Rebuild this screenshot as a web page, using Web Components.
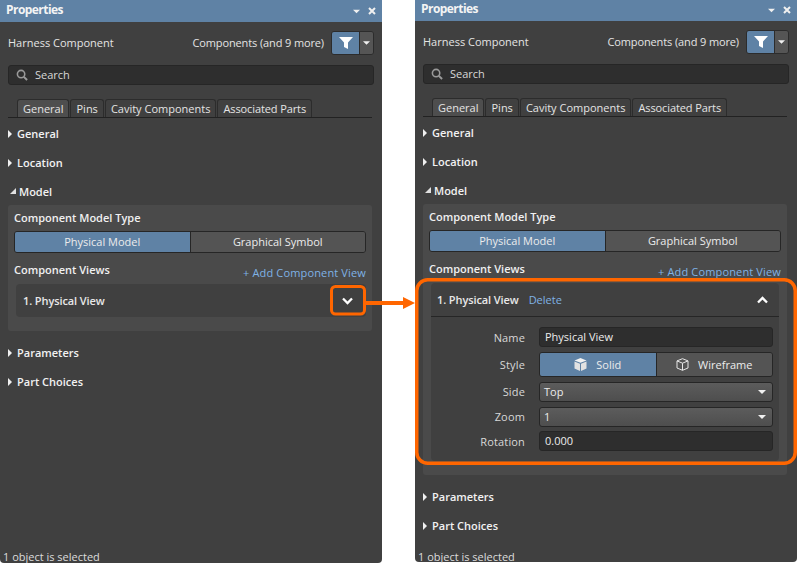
<!DOCTYPE html>
<html>
<head>
<meta charset="utf-8">
<title>Properties</title>
<style>
  html, body { margin: 0; padding: 0; background: #fff; }
  body { width: 797px; height: 563px; overflow: hidden; position: relative; font: 11px "Open Sans", sans-serif; }
  .stage { display: flex; justify-content: space-between; align-items: flex-start; }
  .second { margin-top: -1px; }
</style>
</head>
<body>
<div class="stage">
  <prop-panel>
    <prop-section label="Model" open>
      <model-box>
        <view-card title="1. Physical View"></view-card>
      </model-box>
    </prop-section>
  </prop-panel>
  <prop-panel class="second">
    <prop-section label="Model" open>
      <model-box>
        <view-card title="1. Physical View" expanded></view-card>
      </model-box>
    </prop-section>
  </prop-panel>
</div>
<call-out></call-out>

<script>
"use strict";

(function () {
  var ICON = {
    right: '<svg width="4" height="8" viewBox="0 0 4 8"><path d="M0 0L4 4L0 8Z" fill="#f0f0f0"/></svg>',
    corner: '<svg width="6" height="6" viewBox="0 0 6 6"><path d="M6 0V6H0Z" fill="#e0e0e0"/></svg>',
    down: '<svg width="10" height="5" viewBox="0 0 10 5"><path d="M0 0H10L5 5Z" fill="#f0f0f0"/></svg>',
    funnel: '<svg width="14" height="12" viewBox="0 0 14 12"><path d="M0 0H14L9 5.5V12L5 10V5.5Z" fill="#fff"/></svg>',
    search: '<svg width="12" height="12" viewBox="0 0 13 13" fill="none" stroke="#9a9a9a"><circle cx="5.5" cy="5.5" r="4" stroke-width="1.7"/><path d="M8.5 8.5L12 12" stroke-width="2.2"/></svg>',
    chevDown: '<svg width="11" height="8" viewBox="0 0 11 8" fill="none" stroke="#fff" stroke-width="2.3"><path d="M1 1.5L5.5 6L10 1.5"/></svg>',
    chevUp: '<svg width="11" height="8" viewBox="0 0 11 8" fill="none" stroke="#fff" stroke-width="2.3"><path d="M1 6.5L5.5 2L10 6.5"/></svg>',
    close: '<svg width="8" height="8" viewBox="0 0 8 8" stroke="#f0f0f0" stroke-width="2"><path d="M1 1L7 7M7 1L1 7"/></svg>',
    solid: '<svg width="13" height="13" viewBox="0 0 13 13"><path d="M6.5 0L12.5 2.4L6.5 4.8L.5 2.4Z" fill="#f2f2f2"/><path d="M.5 3.6L6 5.8V13L.5 10.6ZM12.5 3.6L7 5.8V13L12.5 10.6Z" fill="#e2e2e2"/></svg>',
    wire: '<svg width="13" height="13" viewBox="0 0 13 13" fill="none" stroke="#e6e6e6"><path d="M6.5 .7L12 2.9V10L6.5 12.3L1 10V2.9ZM1 2.9L6.5 5.2L12 2.9M6.5 5.2V12.3"/></svg>'
  };

  /* ── panel shell: title bar, filter row, search, tabs, sections ── */
  class PropPanel extends HTMLElement {
    connectedCallback() {
      var root = this.attachShadow({ mode: "open" });
      root.innerHTML = `
        <style>
          :host { display: flex; flex-direction: column; width: 382px; height: 563px; background: #404040; border-radius: 0 0 4px 4px;
                  color: #e4e4e4; font: 11px "Open Sans", sans-serif; }
          .title { height: 22px; background: #5f82a5; display: flex; align-items: center; padding: 0 6px; flex: none; }
          .title b { flex: 1; font-size: 12px; font-weight: 700; color: #f4f4f4; margin-top: -3px; letter-spacing: -.55px; }
          .title span { display: flex; margin-left: 8px; }
          .head { height: 24px; margin: 9px 8px 0; display: flex; align-items: center; flex: none; }
          .head .kind { flex: 1; padding-bottom: 2px; }
          .head .filter { margin-right: 7px; padding-bottom: 2px; letter-spacing: -.12px; }
          .funnel { display: flex; width: 43px; height: 24px; border-radius: 3px; overflow: hidden; box-sizing: border-box; border: 1px solid #2c2c2c; }
          .funnel i { flex: none; width: 28px; background: #5f82a5; display: flex; align-items: center; justify-content: center; border-right: 1px solid #2c2c2c; box-sizing: border-box; }
          .funnel u { flex: 1; background: #555; display: flex; align-items: center; justify-content: center; }
          .funnel u svg { width: 7px; height: 4px; }
          .search { height: 20px; margin: 10px 8px 0; box-sizing: border-box; border: 1px solid #262626; border-radius: 3px;
                    background: #2e2e2e; display: flex; align-items: center; gap: 7px; padding-left: 7px; flex: none; color: #d8d8d8; }
          .search span { padding-bottom: 2px; }
          .tabs { height: 18px; margin: 14px 10px 1px 8px; padding-left: 9px; display: flex; align-items: flex-end; border-bottom: 1px solid #222; flex: none; }
          .tab { height: 18px; box-sizing: border-box; border: 1px solid #2c2c2c; border-bottom: 0; border-radius: 3px 3px 0 0; padding: 0 5px 1px;
                 display: flex; align-items: center; background: #404040; margin-right: 1px; }
          .tab:last-child { letter-spacing: -.1px; }
          .tab.on { background: #4e4e4e; }
          .status { margin-top: auto; margin-bottom: 1px; height: 11px; line-height: 11px; padding-left: 3px; color: #dcdcdc; white-space: nowrap; }
          :host(.second) .status { margin-bottom: 0; }
          .body { display: flex; flex-direction: column; flex: none; }
        </style>
        <div class="title"><b>Properties</b><span>${ICON.down.replace('width="10"', 'width="7"')}</span><span>${ICON.close}</span></div>
        <div class="head">
          <span class="kind">Harness Component</span>
          <span class="filter">Components (and 9 more)</span>
          <span class="funnel"><i>${ICON.funnel}</i><u>${ICON.down}</u></span>
        </div>
        <div class="search">${ICON.search}<span>Search</span></div>
        <div class="tabs">
          <span class="tab on">General</span><span class="tab">Pins</span><span class="tab">Cavity Components</span><span class="tab">Associated Parts</span>
        </div>
        <div class="body">
          <prop-section label="General"></prop-section>
          <prop-section label="Location"></prop-section>
          <slot></slot>
          <prop-section label="Parameters"></prop-section>
          <prop-section label="Part Choices"></prop-section>
        </div>
        <div class="status">1 object is selected</div>`;
    }
  }

  /* ── collapsible section header ── */
  class PropSection extends HTMLElement {
    connectedCallback() {
      var open = this.hasAttribute("open");
      var root = this.attachShadow({ mode: "open" });
      root.innerHTML = `
        <style>
          :host { display: block; }
          .row { height: 29px; display: flex; align-items: center; gap: ${open ? 3 : 5}px; padding-left: ${open ? 10 : 8}px;
                 font-weight: 600; color: #f2f2f2; box-sizing: border-box; }
          .row span { display: flex; }
          :host([open]) .row { height: 24px; margin: 2px 0; }
        </style>
        <div class="row"><span>${open ? ICON.corner : ICON.right}</span>${this.getAttribute("label")}</div>
        <slot></slot>`;
    }
  }

  /* ── grey box around the model options ── */
  class ModelBox extends HTMLElement {
    connectedCallback() {
      var root = this.attachShadow({ mode: "open" });
      root.innerHTML = `
        <style>
          :host { display: block; margin: 0 10px 7px 8px; padding: 6px 6px 14px; background: #4a4a4a; border-radius: 3px; }
          h4 { margin: 0; font-size: 11px; font-weight: 600; color: #f0f0f0; line-height: 13px; }
          .views { display: flex; justify-content: space-between; margin-top: 10px; height: 21px; }
          a { color: #7fb2e5; letter-spacing: .15px; margin-top: 2px; }
          ::slotted(view-card) { margin-left: 2px; }
          ::slotted(view-card[expanded]) { margin-right: 2px; }
        </style>
        <h4>Component Model Type</h4>
        <seg-toggle style="margin-top:7px" a="Physical Model" b="Graphical Symbol"></seg-toggle>
        <div class="views"><h4>Component Views</h4><a>+ Add Component View</a></div>
        <slot></slot>`;
    }
  }

  /* ── two-state button ── */
  class SegToggle extends HTMLElement {
    connectedCallback() {
      var h = this.getAttribute("h") || 22;
      var root = this.attachShadow({ mode: "open" });
      root.innerHTML = `
        <style>
          :host { display: flex; height: ${h}px; box-sizing: border-box; border: 1px solid #262626; border-radius: 3px; overflow: hidden; color: #ececec; }
          div { flex: 1; display: flex; align-items: center; justify-content: center; gap: 9px; background: #545454; padding-bottom: 1px; }
          div.on { background: #5f82a5; border-right: 1px solid #262626; }
          span { display: flex; }
        </style>
        <div class="on">${this.hasAttribute("icons") ? "<span>" + ICON.solid + "</span>" : ""}${this.getAttribute("a")}</div>
        <div>${this.hasAttribute("icons") ? "<span>" + ICON.wire + "</span>" : ""}${this.getAttribute("b")}</div>`;
    }
  }

  /* ── one label + control row ── */
  class FieldRow extends HTMLElement {
    connectedCallback() {
      var root = this.attachShadow({ mode: "open" });
      root.innerHTML = `
        <style>
          :host { display: flex; align-items: center; color: #d8d8d8; }
          label { width: 94px; text-align: right; margin-right: 14px; flex: none; letter-spacing: .15px; }
          :host([lift]) label { padding-bottom: 2px; }
          .ctl { flex: 1; min-width: 0; }
        </style>
        <label>${this.getAttribute("label")}</label><div class="ctl"><slot></slot></div>`;
    }
  }

  class TextBox extends HTMLElement {
    connectedCallback() {
      var root = this.attachShadow({ mode: "open" });
      root.innerHTML = `
        <style>
          :host { display: flex; align-items: center; height: 20px; box-sizing: border-box; border: 1px solid #262626; border-radius: 3px;
                  background: #2e2e2e; padding: 0 0 1px 5px; color: #ececec; }
        </style><slot></slot>`;
    }
  }

  class DropBox extends HTMLElement {
    connectedCallback() {
      var root = this.attachShadow({ mode: "open" });
      root.innerHTML = `
        <style>
          :host { display: flex; align-items: center; justify-content: space-between; height: 20px; box-sizing: border-box; border: 1px solid #262626; border-radius: 3px;
                  background: linear-gradient(#5c5c5c, #4e4e4e); padding: 0 6px 2px 4px; color: #ececec; }
          svg { width: 8px; height: 4px; margin-top: 2px; }
        </style><slot></slot>${ICON.down}`;
    }
  }

  /* ── component view card, collapsed or expanded ── */
  class ViewCard extends HTMLElement {
    connectedCallback() {
      var exp = this.hasAttribute("expanded");
      var root = this.attachShadow({ mode: "open" });
      var form = !exp ? "" : `
        <div class="form">
          <field-row label="Name"><text-box>Physical View</text-box></field-row>
          <field-row label="Style"><seg-toggle h="25" icons a="Solid" b="Wireframe"></seg-toggle></field-row>
          <field-row lift label="Side"><drop-box>Top</drop-box></field-row>
          <field-row lift label="Zoom"><drop-box>1</drop-box></field-row>
          <field-row class="last" label="Rotation"><text-box>0.000</text-box></field-row>
        </div>`;
      root.innerHTML = `
        <style>
          :host { display: block; background: #404040; border-radius: 4px; color: #e8e8e8; }
          .top { height: 33px; display: flex; align-items: center; padding: 0 13px 0 7px; font-weight: 600; box-sizing: border-box; letter-spacing: -.1px; }
          .top a { color: #7fb2e5; font-weight: 400; margin-left: 10px; letter-spacing: 0; }
          .top span { margin-left: auto; display: flex; }
          :host([expanded]) .top { border-bottom: 1px solid #262626; padding-left: 6px; padding-right: 11px; height: 34px; }
          .form { display: flex; flex-direction: column; padding: 10px 6px 10px 0; gap: 5px; }
          .form .last { margin-top: -1px; }
        </style>
        <div class="top">${this.getAttribute("title")}${exp ? "<a>Delete</a>" : ""}<span>${exp ? ICON.chevUp : ICON.chevDown}</span></div>${form}`;
    }
  }

  /* ── orange annotation over the screenshot ── */
  class CallOut extends HTMLElement {
    connectedCallback() {
      var root = this.attachShadow({ mode: "open" });
      root.innerHTML = `
        <style>
          :host { display: block; }
          svg { position: absolute; left: 0; top: 0; pointer-events: none; }
        </style>
        <svg width="797" height="563" fill="none" stroke="#ff6600" stroke-width="3">
          <rect x="331.5" y="286.5" width="33" height="27.5" rx="4"/>
          <path d="M366 303H404" stroke-width="4"/>
          <path d="M403 297L415 303L403 309Z" fill="#ff6600" stroke="none"/>
          <rect x="416.75" y="279.75" width="378.5" height="183.5" rx="11" stroke-width="3.5"/>
        </svg>`;
    }
  }

  customElements.define("prop-section", PropSection);
  customElements.define("seg-toggle", SegToggle);
  customElements.define("field-row", FieldRow);
  customElements.define("text-box", TextBox);
  customElements.define("drop-box", DropBox);
  customElements.define("view-card", ViewCard);
  customElements.define("model-box", ModelBox);
  customElements.define("prop-panel", PropPanel);
  customElements.define("call-out", CallOut);
})();
</script>
</body>
</html>
